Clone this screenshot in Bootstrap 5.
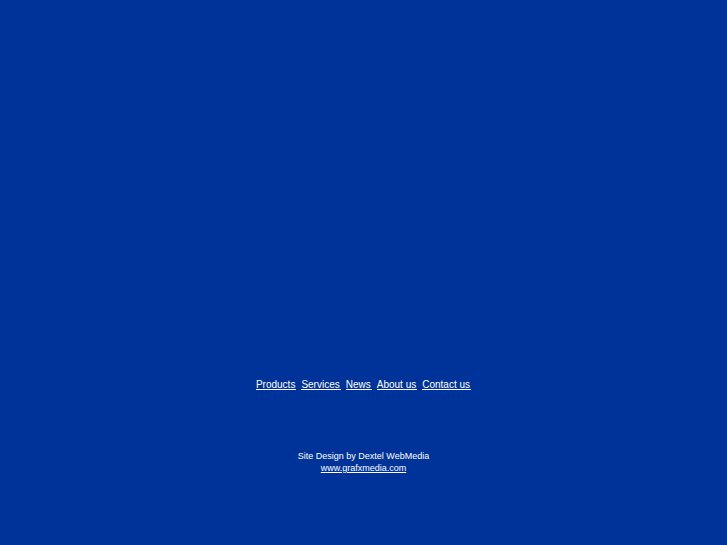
<!DOCTYPE html>
<html lang="en">
<head>
<meta charset="utf-8">
<meta name="viewport" content="width=device-width, initial-scale=1">
<title>Dextel WebMedia</title>
<link href="https://cdn.jsdelivr.net/npm/bootstrap@5.3.0/dist/css/bootstrap.min.css" rel="stylesheet">
<style>
body{background:#003399;color:#fff;font-family:"Liberation Sans",Arial,sans-serif}
a,a:hover{color:#fff}
.site-links{font-size:10px;line-height:9px;gap:5px}
.site-links a{border-bottom:1px solid #fff;padding-right:1px}
.credit{font-size:9px;line-height:12px}
.page-foot{padding-bottom:71px}
.page-foot nav{margin-bottom:60px}
</style>
</head>
<body class="min-vh-100 d-flex flex-column">
<footer class="page-foot mt-auto text-center">
<nav class="site-links d-flex justify-content-center" aria-label="Site">
<a class="text-decoration-none" href="#">Products</a>
<a class="text-decoration-none" href="#">Services</a>
<a class="text-decoration-none" href="#">News</a>
<a class="text-decoration-none" href="#">About us</a>
<a class="text-decoration-none" href="#">Contact us</a>
</nav>
<p class="credit mb-0">Site Design by Dextel WebMedia<br><a href="#">www.grafxmedia.com</a></p>
</footer>
<script src="https://cdn.jsdelivr.net/npm/bootstrap@5.3.0/dist/js/bootstrap.bundle.min.js"></script>
</body>
</html>
